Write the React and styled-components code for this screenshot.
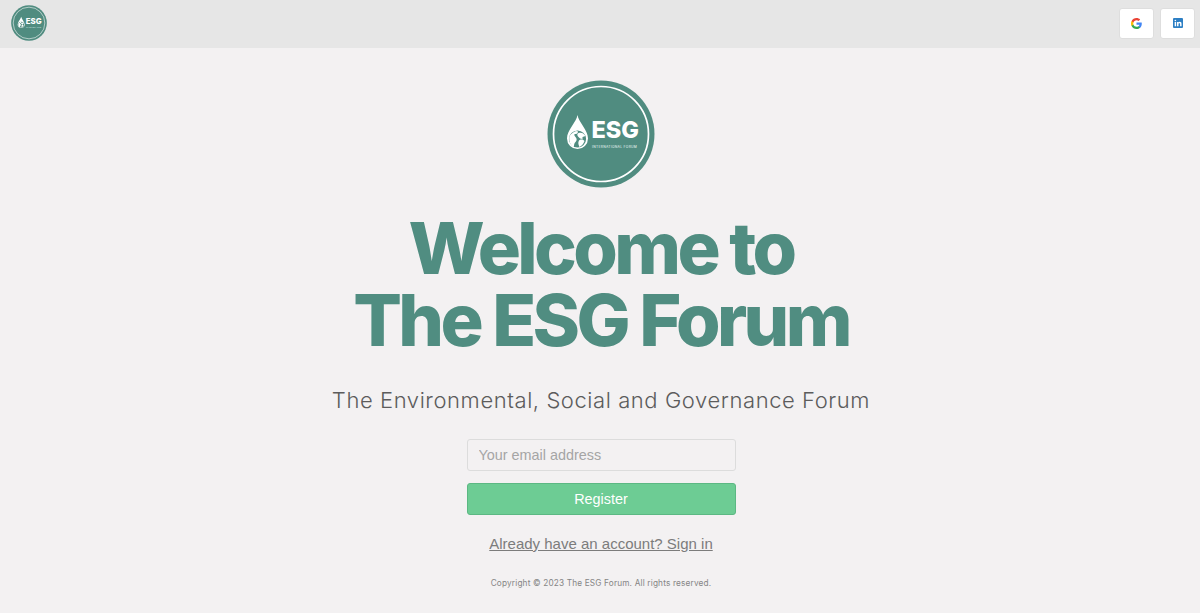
import React from "react";
import styled, { createGlobalStyle } from "styled-components";

const GlobalStyle = createGlobalStyle`
  html, body {
    margin: 0;
    padding: 0;
    background: #f3f1f2;
    font-family: Inter, "Liberation Sans", sans-serif;
  }
  * { box-sizing: border-box; }
`;

const Page = styled.div`
  min-height: 613px;
  display: flex;
  flex-direction: column;
  background: #f3f1f2;
`;

const TopBar = styled.header`
  height: 48px;
  display: flex;
  align-items: center;
  justify-content: space-between;
  padding: 0 5px 2px 11px;
  background: #e6e6e6;
`;

const Social = styled.div`
  display: flex;
  gap: 6px;
`;

const SocialButton = styled.button`
  width: 35px;
  height: 31px;
  padding: 0;
  display: flex;
  align-items: center;
  justify-content: center;
  background: #fff;
  border: 1px solid #dedede;
  border-radius: 3px;
`;

const Main = styled.main`
  display: flex;
  flex-direction: column;
  align-items: center;
  padding: 32px 0 0 2px;
`;

const Title = styled.h1`
  margin: 24px 0 0;
  font-size: 72px;
  line-height: 72px;
  font-weight: 800;
  letter-spacing: -0.05em;
  text-align: center;
  color: #508d81;
`;

const Subtitle = styled.p`
  margin: 28px 0 0;
  font-size: 22px;
  line-height: 32px;
  font-weight: 300;
  letter-spacing: 0.026em;
  color: #5c5c5c;
`;

const Form = styled.form`
  width: 269px;
  margin-top: 23px;
  display: flex;
  flex-direction: column;
  gap: 12px;
`;

const EmailInput = styled.input`
  height: 32px;
  padding: 0 11px;
  font-family: "Liberation Sans", Arial, sans-serif;
  font-size: 14.4px;
  background: #f3f1f2;
  border: 1px solid #dcdcdc;
  border-radius: 3px;
  outline: none;
  &::placeholder { color: #a5a5a5; opacity: 1; }
`;

const RegisterButton = styled.button`
  height: 32px;
  font-family: "Liberation Sans", Arial, sans-serif;
  font-size: 14.4px;
  color: #fff;
  background: #6dcc94;
  border: 1px solid #5cb883;
  border-radius: 3px;
`;

const SignIn = styled.a`
  margin-top: 19px;
  font-family: "Liberation Sans", Arial, sans-serif;
  font-size: 15px;
  line-height: 20px;
  color: #7c7c7c;
  text-decoration: underline;
`;

const Copyright = styled.p`
  margin: 22px 0 0;
  font-size: 8.25px;
  line-height: 14px;
  letter-spacing: 0.02em;
  color: #858585;
`;

const Logo = ({ size }) => (
  <svg width={size} height={size} viewBox="0 0 108 108">
    <circle cx="54" cy="54" r="53.5" fill="#508c80" />
    <circle cx="54" cy="54" r="47.5" fill="none" stroke="#fff" strokeWidth="1.7" />
    <g transform="translate(-6.5 0)">
      <path d="M37 35C38 42 47.500 50 47.500 58.500A10.500 10.500 0 0 1 26.500 58.500C26.500 50 36 42 37 35Z" fill="#fff" />
      <circle cx="37" cy="59" r="8.600" fill="#508c80" />
      <g fill="#fff">
        <path d="M29 56c2-3 5-5 8-5 1 1 0 3-2 3s-1 2 0 3 2 3 0 5-1 4-2 5c-3-2-5-6-4-11Z" />
        <path d="M38 53c3-1 5 0 7 3l-3 1 0 2c-2 0-3-1-4-2s-2-3 0-4Z" />
        <path d="M39 60c3-1 4 0 5 1-1 3-3 5-5 6-1-2-2-5 0-7Z" />
      </g>
    </g>
    <text x="44.500" y="58" fontFamily="Inter, sans-serif" fontWeight="800" fontSize="23.500" fill="#fff">ESG</text>
    <text x="45" y="67.500" fontFamily="Inter, sans-serif" fontWeight="500" fontSize="3.300" letterSpacing="0.3" fill="#dfeae7">INTERNATIONAL FORUM</text>
  </svg>
);

const GoogleIcon = () => (
  <svg width="11" height="11" viewBox="0 0 24 24">
    <path fill="#4285F4" d="M23.500 12.300c0-.8-.1-1.600-.2-2.300H12v4.500h6.500c-.3 1.500-1.100 2.700-2.400 3.600v3h3.900c2.300-2.100 3.500-5.200 3.500-8.800Z" />
    <path fill="#34A853" d="M12 24c3.200 0 6-1.100 8-2.900l-3.900-3c-1.100.7-2.500 1.200-4.100 1.200-3.100 0-5.800-2.100-6.700-5H1.300v3.100C3.300 21.300 7.300 24 12 24Z" />
    <path fill="#FBBC05" d="M5.300 14.300c-.5-1.500-.5-3.100 0-4.600V6.600h-4a12 12 0 0 0 0 10.800l4-3.100Z" />
    <path fill="#EA4335" d="M12 4.800c1.800 0 3.300.6 4.600 1.800l3.400-3.400C17.900 1.200 15.200 0 12 0 7.300 0 3.300 2.700 1.300 6.600l4 3.100c.9-2.800 3.600-4.900 6.700-4.900Z" />
  </svg>
);

const LinkedInIcon = () => (
  <svg width="10" height="10" viewBox="0 0 24 24">
    <rect width="24" height="24" rx="2.500" fill="#2d7fc4" />
    <path fill="#fff" d="M4 9.500h3.500V20H4ZM5.700 4a2 2 0 1 1 0 4 2 2 0 0 1 0-4ZM9.700 9.500H13V11c.6-1 1.800-1.800 3.500-1.800 3 0 4 2 4 5V20H17v-5c0-1.400-.3-2.700-1.800-2.700S13.200 13.500 13.200 15v5H9.700Z" />
  </svg>
);

export default function App() {
  return (
    <Page>
      <GlobalStyle />
      <TopBar>
        <Logo size={36} />
        <Social>
          <SocialButton aria-label="Google"><GoogleIcon /></SocialButton>
          <SocialButton aria-label="LinkedIn"><LinkedInIcon /></SocialButton>
        </Social>
      </TopBar>
      <Main>
        <Logo size={108} />
        <Title>Welcome to<br />The ESG Forum</Title>
        <Subtitle>The Environmental, Social and Governance Forum</Subtitle>
        <Form onSubmit={(e) => e.preventDefault()}>
          <EmailInput type="email" placeholder="Your email address" />
          <RegisterButton type="submit">Register</RegisterButton>
        </Form>
        <SignIn href="#">Already have an account? Sign in</SignIn>
        <Copyright>Copyright © 2023 The ESG Forum. All rights reserved.</Copyright>
      </Main>
    </Page>
  );
}
